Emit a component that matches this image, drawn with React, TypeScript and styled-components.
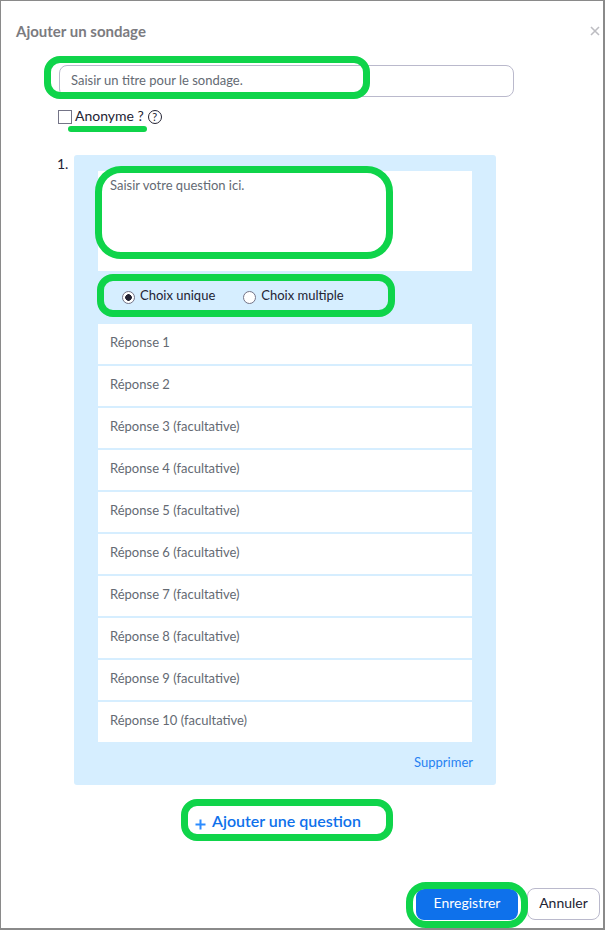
import React from "react";
import styled, { createGlobalStyle } from "styled-components";

const Global = createGlobalStyle`
  html, body { margin: 0; padding: 0; background: #fff; }
  body { font-family: Lato, "Liberation Sans", sans-serif; }
`;

const GREEN = "#0fd44a";

const Dialog = styled.div`
  position: relative;
  box-sizing: border-box;
  width: 605px;
  height: 930px;
  background: #fff;
  border-top: 1px solid #8a8a8a;
  border-left: 1px solid #8a8a8a;
  border-right: 2px solid #8a8a8a;
  border-bottom: 2px solid #8a8a8a;
  padding: 21px 0 0 15px;
  display: flex;
  flex-direction: column;
`;

const Header = styled.div`
  display: flex;
  justify-content: space-between;
  align-items: center;
  height: 17px;
  padding-right: 3px;
`;

const Title = styled.h1`
  margin: 0;
  font-size: 15px;
  font-weight: 700;
  color: #7b7b80;
`;

const Close = styled.svg`
  width: 10px;
  height: 10px;
  stroke: #bdbdc2;
  stroke-width: 1.6;
`;

const Body = styled.div`
  padding-left: 43px;
  margin-top: 26px;
  display: flex;
  flex-direction: column;
`;

const TitleInput = styled.div`
  box-sizing: border-box;
  width: 455px;
  height: 32px;
  border: 1px solid #bab9cc;
  border-radius: 8px;
  padding: 0 11px 2px;
  display: flex;
  align-items: center;
  font-size: 13px;
  color: #646a73;
`;

const AnonRow = styled.div`
  display: flex;
  align-items: flex-start;
  margin-top: 10px;
  height: 18px;
  font-size: 14px;
  line-height: 18px;
  color: #232333;
`;

const CheckBox = styled.span`
  box-sizing: border-box;
  width: 14px;
  height: 14px;
  margin: 3px 3px 0 -1px;
  border: 1px solid #747487;
`;

const HelpIcon = styled.span`
  box-sizing: border-box;
  width: 14px;
  height: 14px;
  margin: 3px 0 0 4px;
  border: 1px solid #232333;
  border-radius: 50%;
  font-size: 11px;
  line-height: 12px;
  text-align: center;
`;

const QuestionRow = styled.div`
  display: flex;
  margin-top: 30px;
`;

const Index = styled.div`
  width: 17px;
  margin-left: -2px;
  font-size: 14px;
  line-height: 18px;
  color: #232333;
`;

const Panel = styled.div`
  box-sizing: border-box;
  width: 422px;
  height: 630px;
  background: #d6eeff;
  border-radius: 3px;
  padding: 16px 24px 0;
  display: flex;
  flex-direction: column;
`;

const QuestionBox = styled.div`
  box-sizing: border-box;
  height: 100px;
  background: #fff;
  padding: 6px 12px;
  font-size: 13px;
  line-height: 16px;
  color: #646a73;
`;

const RadioRow = styled.div`
  box-sizing: border-box;
  display: flex;
  align-items: center;
  height: 53px;
  padding: 0 0 4px 24px;
  gap: 28px;
`;

const RadioOption = styled.label`
  display: flex;
  align-items: flex-start;
  gap: 5px;
  font-size: 13px;
  line-height: 16px;
  color: #232333;
`;

const RadioDot = styled.span<{ $on?: boolean }>`
  box-sizing: border-box;
  width: 13px;
  height: 13px;
  margin-top: 4px;
  border-radius: 50%;
  border: 1px solid #747487;
  background: ${(p) => (p.$on ? "radial-gradient(circle, #232333 0 3px, #fff 3.6px)" : "#fff")};
`;

const Answers = styled.div`
  display: flex;
  flex-direction: column;
  gap: 2px;
`;

const Answer = styled.div`
  box-sizing: border-box;
  height: 40px;
  background: #fff;
  padding: 0 12px 5px;
  display: flex;
  align-items: center;
  font-size: 13px;
  color: #646a73;
`;

const DeleteLink = styled.a`
  align-self: flex-end;
  margin: 12px -1px 0 0;
  font-size: 13px;
  line-height: 16px;
  color: #2681f2;
`;

const AddQuestion = styled.div`
  display: flex;
  align-items: baseline;
  justify-content: center;
  width: 422px;
  margin: 26px 0 0 15px;
  padding-right: 14px;
  box-sizing: border-box;
  font-size: 16px;
  line-height: 20px;
  font-weight: 600;
  color: #0e71eb;
`;

const Plus = styled.svg`
  width: 11px;
  height: 11px;
  margin-right: 6px;
  transform: translateY(3px);
  stroke: #2d8cff;
  stroke-width: 2;
`;

const Footer = styled.div`
  position: absolute;
  right: 3px;
  bottom: 8px;
  display: flex;
  align-items: flex-end;
  gap: 9px;
`;

const SaveButton = styled.button`
  width: 102px;
  height: 31px;
  padding: 0 0 4px;
  border: none;
  border-radius: 8px;
  background: #0e71eb;
  color: #fff;
  font: 400 14px Lato, sans-serif;
`;

const CancelButton = styled.button`
  width: 73px;
  height: 32px;
  padding: 0 0 4px;
  border: 1px solid #bab9cc;
  border-radius: 8px;
  background: #fff;
  color: #232333;
  font: 400 14px Lato, sans-serif;
`;

// green annotations drawn on top of the screenshot
const Mark = styled.div<{ $x: number; $y: number; $w: number; $h: number; $r: number }>`
  position: absolute;
  box-sizing: border-box;
  left: ${(p) => p.$x - 1}px;
  top: ${(p) => p.$y - 1}px;
  width: ${(p) => p.$w}px;
  height: ${(p) => p.$h}px;
  border: 7px solid ${GREEN};
  border-radius: ${(p) => p.$r}px;
  pointer-events: none;
`;

const Underline = styled.div`
  position: absolute;
  left: 67px;
  top: 125px;
  width: 79px;
  height: 6px;
  border-radius: 3px;
  background: ${GREEN};
`;

const answers = [
  "Réponse 1",
  "Réponse 2",
  ...[3, 4, 5, 6, 7, 8, 9, 10].map((n) => `Réponse ${n} (facultative)`),
];

export default function App() {
  return (
    <Dialog>
      <Global />
      <Header>
        <Title>Ajouter un sondage</Title>
        <Close viewBox="0 0 10 10">
          <path d="M1 1l8 8M9 1l-8 8" />
        </Close>
      </Header>
      <Body>
        <TitleInput>Saisir un titre pour le sondage.</TitleInput>
        <AnonRow>
          <CheckBox />
          Anonyme ?
          <HelpIcon>?</HelpIcon>
        </AnonRow>
        <QuestionRow>
          <Index>1.</Index>
          <Panel>
            <QuestionBox>Saisir votre question ici.</QuestionBox>
            <RadioRow>
              <RadioOption>
                <RadioDot $on />
                Choix unique
              </RadioOption>
              <RadioOption>
                <RadioDot />
                Choix multiple
              </RadioOption>
            </RadioRow>
            <Answers>
              {answers.map((a) => (
                <Answer key={a}>{a}</Answer>
              ))}
            </Answers>
            <DeleteLink>Supprimer</DeleteLink>
          </Panel>
        </QuestionRow>
        <AddQuestion>
          <Plus viewBox="0 0 11 11">
            <path d="M5.5 0.5v10M0.5 5.5h10" />
          </Plus>
          Ajouter une question
        </AddQuestion>
      </Body>
      <Footer>
        <SaveButton>Enregistrer</SaveButton>
        <CancelButton>Annuler</CancelButton>
      </Footer>
      <Mark $x={44} $y={56} $w={326} $h={43} $r={16} />
      <Underline />
      <Mark $x={95} $y={166} $w={298} $h={93} $r={26} />
      <Mark $x={97} $y={274} $w={298} $h={43} $r={16} />
      <Mark $x={181} $y={799} $w={212} $h={42} $r={16} />
      <Mark $x={406} $y={882} $w={122} $h={46} $r={20} />
    </Dialog>
  );
}
